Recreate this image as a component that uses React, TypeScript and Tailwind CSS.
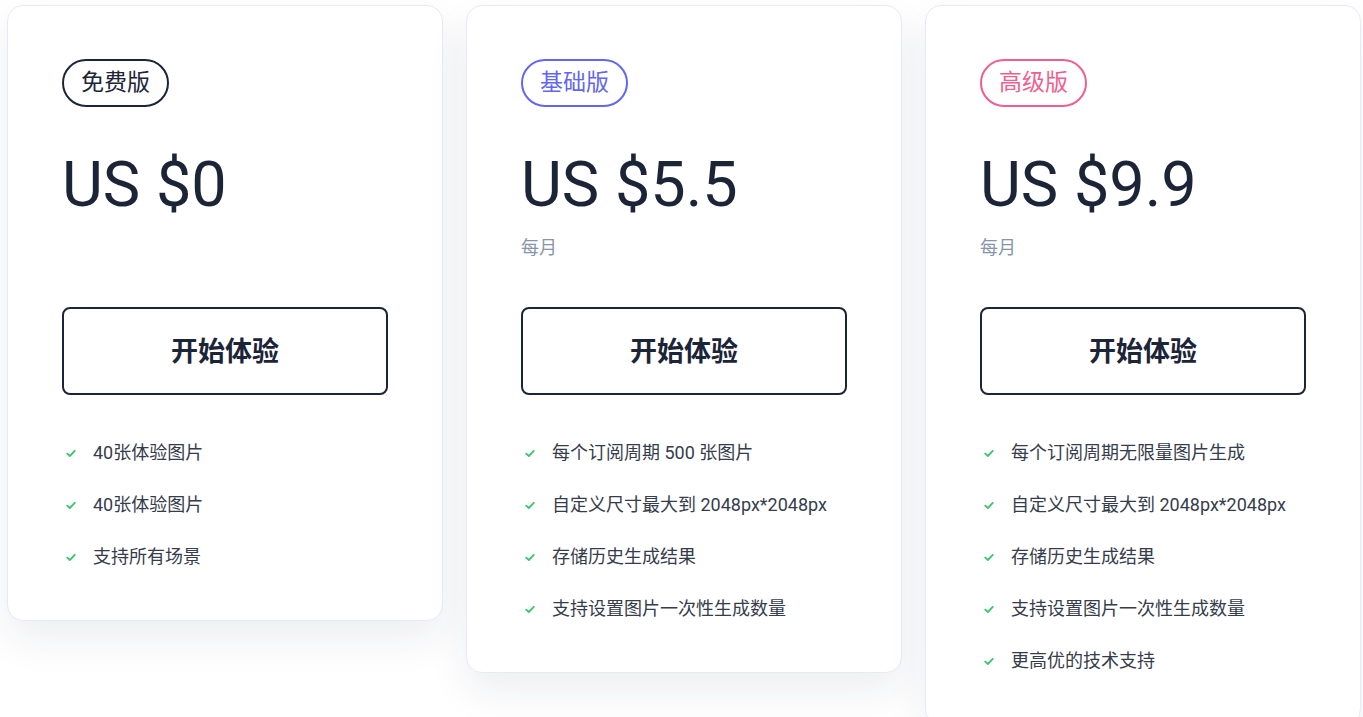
const plans = [
  {
    name: '免费版',
    badge: 'border-[#1c2437] text-[#1c2437]',
    price: 'US $0',
    period: '',
    features: ['40张体验图片', '40张体验图片', '支持所有场景'],
  },
  {
    name: '基础版',
    badge: 'border-[#6366f1] text-[#6366f1]',
    price: 'US $5.5',
    period: '每月',
    features: ['每个订阅周期 500 张图片', '自定义尺寸最大到 2048px*2048px', '存储历史生成结果', '支持设置图片一次性生成数量'],
  },
  {
    name: '高级版',
    badge: 'border-[#ef5f8e] text-[#ef5f8e]',
    price: 'US $9.9',
    period: '每月',
    features: [
      '每个订阅周期无限量图片生成',
      '自定义尺寸最大到 2048px*2048px',
      '存储历史生成结果',
      '支持设置图片一次性生成数量',
      '更高优的技术支持',
    ],
  },
]

function Check() {
  return (
    <svg viewBox="0 0 12 10" className="w-[10px] h-[9px] text-[#3fc46e] shrink-0" fill="none">
      <path d="M1.5 5.2 L4.6 8 L10.5 1.8" stroke="currentColor" strokeWidth="2.2" strokeLinecap="round" strokeLinejoin="round" />
    </svg>
  )
}

export default function App() {
  return (
    <div
      className="min-h-screen bg-white overflow-hidden"
      style={{ fontFamily: "Roboto, 'Noto Sans CJK SC', sans-serif" }}
    >
      <div className="flex items-start gap-[23px] pl-[7px] pt-[5px]">
        {plans.map((plan) => (
          <div
            key={plan.name}
            className="w-[436px] shrink-0 bg-white border border-[#e9e9f6] rounded-2xl px-[54px] pt-[53px] pb-[51px] shadow-[0_18px_40px_rgba(30,35,80,0.08)]"
          >
            <div className={`inline-flex items-center h-12 px-[17px] pt-[1px] border-2 rounded-full text-[23px] ${plan.badge}`}>
              {plan.name}
            </div>
            <div className="mt-[46px] text-[63px] leading-[64px] text-[#1c2437]">{plan.price}</div>
            <div className="mt-[19px] h-6 text-[18px] leading-6 text-[#8894aa]">{plan.period}</div>
            <button className="mt-[47px] w-full h-[88px] pt-[3px] border-2 border-[#1c2437] rounded-lg text-[27px] font-bold text-[#1c2437] bg-transparent">
              开始体验
            </button>
            <ul className="mt-[46px] flex flex-col gap-[28px]">
              {plan.features.map((f, i) => (
                <li key={i} className="flex items-center h-6 text-[18px] leading-6 text-[#353c4b]">
                  <span className="w-[31px] pl-[4px] flex items-center">
                    <Check />
                  </span>
                  {f}
                </li>
              ))}
            </ul>
          </div>
        ))}
      </div>
    </div>
  )
}
